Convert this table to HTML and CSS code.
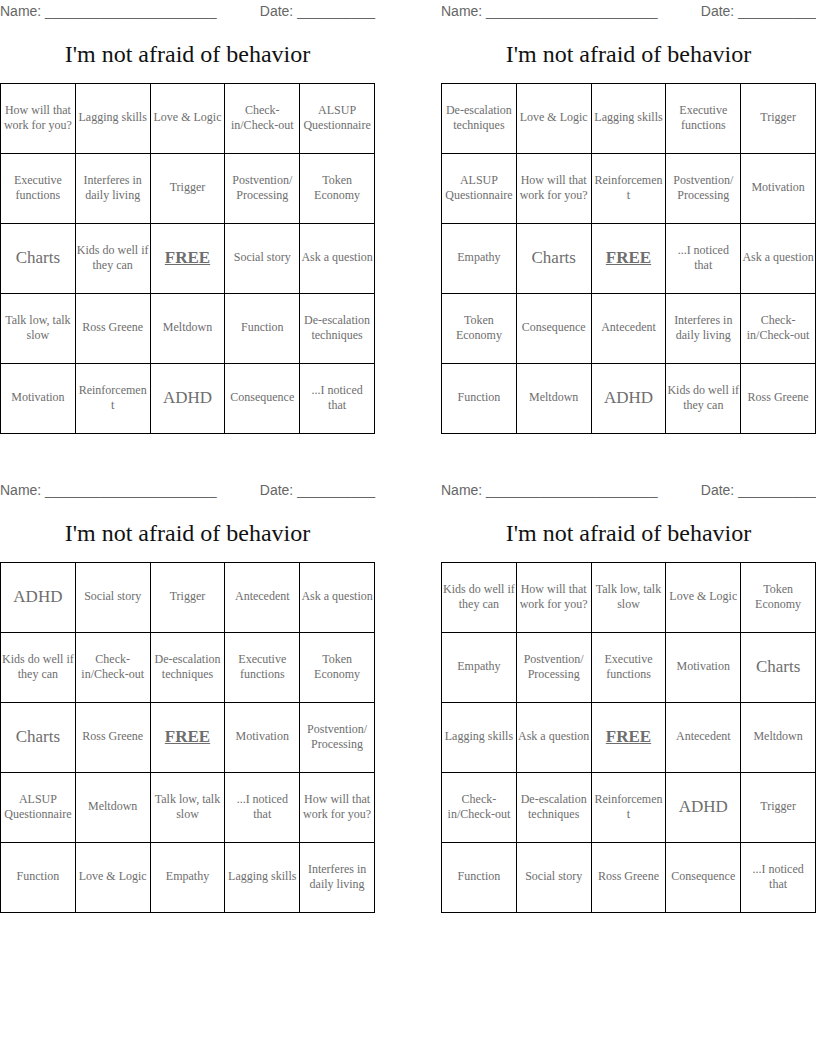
FILE: index.html
```html
<!DOCTYPE html>
<html lang="en">
<head>
<meta charset="utf-8">
<title>I'm not afraid of behavior - Bingo</title>
<link rel="stylesheet" href="styles.css">
</head>
<body>
<div class="sheet">

  <section class="card">
    <div class="fields"><span>Name: ______________________</span><span>Date: __________</span></div>
    <h1 class="title">I'm not afraid of behavior</h1>
    <table class="board">
      <tr><td>How will that work for you?</td><td>Lagging skills</td><td>Love &amp; Logic</td><td>Check-<br>in/Check-out</td><td>ALSUP Questionnaire</td></tr>
      <tr><td>Executive functions</td><td>Interferes in daily living</td><td>Trigger</td><td>Postvention/ Processing</td><td>Token Economy</td></tr>
      <tr><td class="big">Charts</td><td>Kids do well if they can</td><td class="free">FREE</td><td>Social story</td><td>Ask a question</td></tr>
      <tr><td>Talk low, talk slow</td><td>Ross Greene</td><td>Meltdown</td><td>Function</td><td>De-escalation techniques</td></tr>
      <tr><td>Motivation</td><td>Reinforcemen<br>t</td><td class="big">ADHD</td><td>Consequence</td><td>...I noticed that</td></tr>
    </table>
  </section>

  <section class="card">
    <div class="fields"><span>Name: ______________________</span><span>Date: __________</span></div>
    <h1 class="title">I'm not afraid of behavior</h1>
    <table class="board">
      <tr><td>De-escalation techniques</td><td>Love &amp; Logic</td><td>Lagging skills</td><td>Executive functions</td><td>Trigger</td></tr>
      <tr><td>ALSUP Questionnaire</td><td>How will that work for you?</td><td>Reinforcemen<br>t</td><td>Postvention/ Processing</td><td>Motivation</td></tr>
      <tr><td>Empathy</td><td class="big">Charts</td><td class="free">FREE</td><td>...I noticed that</td><td>Ask a question</td></tr>
      <tr><td>Token Economy</td><td>Consequence</td><td>Antecedent</td><td>Interferes in daily living</td><td>Check-<br>in/Check-out</td></tr>
      <tr><td>Function</td><td>Meltdown</td><td class="big">ADHD</td><td>Kids do well if they can</td><td>Ross Greene</td></tr>
    </table>
  </section>

  <section class="card">
    <div class="fields"><span>Name: ______________________</span><span>Date: __________</span></div>
    <h1 class="title">I'm not afraid of behavior</h1>
    <table class="board">
      <tr><td class="big">ADHD</td><td>Social story</td><td>Trigger</td><td>Antecedent</td><td>Ask a question</td></tr>
      <tr><td>Kids do well if they can</td><td>Check-<br>in/Check-out</td><td>De-escalation techniques</td><td>Executive functions</td><td>Token Economy</td></tr>
      <tr><td class="big">Charts</td><td>Ross Greene</td><td class="free">FREE</td><td>Motivation</td><td>Postvention/ Processing</td></tr>
      <tr><td>ALSUP Questionnaire</td><td>Meltdown</td><td>Talk low, talk slow</td><td>...I noticed that</td><td>How will that work for you?</td></tr>
      <tr><td>Function</td><td>Love &amp; Logic</td><td>Empathy</td><td>Lagging skills</td><td>Interferes in daily living</td></tr>
    </table>
  </section>

  <section class="card">
    <div class="fields"><span>Name: ______________________</span><span>Date: __________</span></div>
    <h1 class="title">I'm not afraid of behavior</h1>
    <table class="board">
      <tr><td>Kids do well if they can</td><td>How will that work for you?</td><td>Talk low, talk slow</td><td>Love &amp; Logic</td><td>Token Economy</td></tr>
      <tr><td>Empathy</td><td>Postvention/ Processing</td><td>Executive functions</td><td>Motivation</td><td class="big">Charts</td></tr>
      <tr><td>Lagging skills</td><td>Ask a question</td><td class="free">FREE</td><td>Antecedent</td><td>Meltdown</td></tr>
      <tr><td>Check-<br>in/Check-out</td><td>De-escalation techniques</td><td>Reinforcemen<br>t</td><td class="big">ADHD</td><td>Trigger</td></tr>
      <tr><td>Function</td><td>Social story</td><td>Ross Greene</td><td>Consequence</td><td>...I noticed that</td></tr>
    </table>
  </section>

</div>
</body>
</html>
```
FILE: styles.css
```css
html, body {
  margin: 0;
  padding: 0;
  background: #ffffff;
}

.sheet {
  display: grid;
  grid-template-columns: 375px 375px;
  column-gap: 66px;
  row-gap: 45px;
}

.card {
  width: 375px;
}

.fields {
  display: flex;
  justify-content: space-between;
  font-family: "Liberation Sans", Arial, sans-serif;
  font-size: 14px;
  line-height: 22px;
  height: 22px;
  color: #666666;
  white-space: nowrap;
}

.title {
  margin: 17px 0 14px;
  font-family: "Liberation Serif", "Times New Roman", serif;
  font-weight: normal;
  font-size: 24px;
  line-height: 30px;
  text-align: center;
  color: #111111;
}

.board {
  width: 375px;
  border-collapse: collapse;
  table-layout: fixed;
}

.board td {
  border: 1px solid #000000;
  height: 67px;
  padding: 0 1px 2px;
  text-align: center;
  vertical-align: middle;
  font-family: "Liberation Serif", "Times New Roman", serif;
  font-size: 12px;
  line-height: 15px;
  color: #6e6e6e;
}

.board td.big {
  font-size: 17px;
  line-height: 20px;
}

.board td.free {
  font-size: 17px;
  line-height: 20px;
  font-weight: bold;
  text-decoration: underline;
}
```
